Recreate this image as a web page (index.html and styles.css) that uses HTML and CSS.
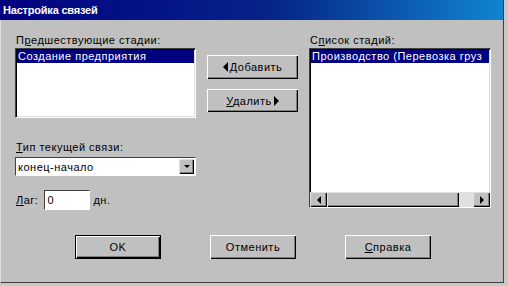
FILE: index.html
```html
<!DOCTYPE html>
<html lang="ru">

<head>
    <meta charset="UTF-8">
    <meta name="viewport" content="width=device-width, initial-scale=1.0">
    <title>Настройка связей</title>
    <link rel="stylesheet" href="styles.css">
</head>

<body>
    <div class="dialog">
        <div class="titlebar">Настройка связей</div>

        <div class="content">
            <!-- left column: predecessors, link type, lag -->
            <div class="col col-left">
                <div class="label">П<u>р</u>едшествующие стадии:</div>
                <div class="listbox list-left">
                    <div class="item selected">Создание предприятия</div>
                </div>

                <div class="label label-type"><u>Т</u>ип текущей связи:</div>
                <div class="combo">
                    <span class="combo-text">конец-начало</span>
                    <span class="combo-btn"><span class="tri-down"></span></span>
                </div>

                <div class="lag-row">
                    <span class="label"><u>Л</u>аг:</span>
                    <span class="edit">0</span>
                    <span class="label">дн.</span>
                </div>
            </div>

            <!-- middle column: move buttons -->
            <div class="col col-mid">
                <button class="btn btn-add"><span class="tri-left"></span><span><u>Д</u>обавить</span></button>
                <button class="btn btn-del"><span><u>У</u>далить</span><span class="tri-right"></span></button>
            </div>

            <!-- right column: all stages -->
            <div class="col col-right">
                <div class="label">С<u>п</u>исок стадий:</div>
                <div class="listbox list-right">
                    <div class="list-body">
                        <div class="item selected">Производство (Перевозка груз</div>
                    </div>
                    <div class="hscroll">
                        <span class="sb-btn"><span class="tri-left small"></span></span>
                        <span class="sb-thumb"></span>
                        <span class="sb-track"></span>
                        <span class="sb-btn"><span class="tri-right small"></span></span>
                    </div>
                </div>
            </div>
        </div>

        <div class="footer">
            <button class="btn btn-default">OK</button>
            <button class="btn">Отменить</button>
            <button class="btn"><span><u>С</u>правка</span></button>
        </div>
    </div>
</body>

</html>
```

FILE: styles.css
```css
body {
    margin: 0;
    width: 508px;
    height: 286px;
    background: #c8c8c8;
    font-family: "Liberation Sans", Arial, sans-serif;
    font-size: 11px;
    letter-spacing: 0.5px;
    color: #000;
    overflow: hidden;
}

.dialog {
    width: 502px;
    height: 282px;
    background: #c0c0c0;
    border-left: 1px solid #dfdfdf;
    border-right: 1px solid #404040;
    border-bottom: 1px solid #404040;
    box-sizing: content-box;
}

.titlebar {
    height: 20px;
    line-height: 20px;
    padding-left: 3px;
    margin-left: -1px;
    color: white;
    font-weight: bold;
    font-size: 11px;
    letter-spacing: -0.2px;
    background: linear-gradient(to right, #000080 0%, #06258a 55%, #1084d0 100%);
}

.content {
    display: flex;
    padding-top: 14px;
}

.col {
    display: flex;
    flex-direction: column;
}

.col-left {
    width: 181px;
    margin-left: 14px;
}

.col-mid {
    width: 91px;
    margin-left: 11px;
    padding-top: 21px;
}

.col-right {
    width: 182px;
    margin-left: 11px;
}

.label {
    height: 13px;
    line-height: 13px;
    padding-left: 1px;
    margin-bottom: 1px;
    white-space: nowrap;
}

u {
    text-decoration-thickness: 1px;
    text-underline-offset: 1px;
}

.listbox {
    background: white;
    border-top: 1px solid #404040;
    border-left: 1px solid #404040;
    border-right: 1px solid #ffffff;
    border-bottom: 1px solid #ffffff;
    box-shadow: inset 1px 1px 0 #000, inset -1px -1px 0 #dfdfdf;
    padding: 1px;
    box-sizing: border-box;
    overflow: hidden;
}

.list-left {
    height: 70px;
}

.list-right {
    height: 160px;
    display: flex;
    flex-direction: column;
}

.list-body {
    flex: 1;
    overflow: hidden;
}

.item {
    height: 13px;
    line-height: 13px;
    padding-left: 1px;
    white-space: nowrap;
}

.selected {
    background: #000080;
    color: white;
}

.label-type {
    margin-top: 23px;
    margin-bottom: 3px;
}

.combo {
    height: 19px;
    display: flex;
    align-items: center;
    background: white;
    border-top: 1px solid #404040;
    border-left: 1px solid #404040;
    border-right: 1px solid #ffffff;
    border-bottom: 1px solid #ffffff;
    box-sizing: border-box;
    padding: 1px;
}

.combo-text {
    flex: 1;
    padding-left: 1px;
}

.combo-btn {
    width: 15px;
    height: 15px;
    background: #c0c0c0;
    box-shadow: inset 1px 1px 0 #dfdfdf, inset -1px -1px 0 #000, inset -2px -2px 0 #808080;
    display: flex;
    align-items: center;
    justify-content: center;
}

.tri-down {
    width: 0;
    height: 0;
    border-left: 3px solid transparent;
    border-right: 3px solid transparent;
    border-top: 3px solid #000;
}

.lag-row {
    display: flex;
    align-items: center;
    margin-top: 14px;
    gap: 2px;
}

.lag-row .label {
    margin-bottom: 0;
}

.edit {
    width: 46px;
    height: 20px;
    line-height: 18px;
    background: white;
    border-top: 1px solid #404040;
    border-left: 1px solid #404040;
    border-right: 1px solid #ffffff;
    border-bottom: 1px solid #ffffff;
    box-sizing: border-box;
    padding-left: 2px;
    margin-left: 4px;
}

.btn {
    font-family: "Liberation Sans", Arial, sans-serif;
    font-size: 11px;
    letter-spacing: 0.5px;
    color: #000;
    background: #c0c0c0;
    border: none;
    padding: 0;
    box-shadow: inset 1px 1px 0 #ffffff, inset -1px -1px 0 #000, inset -2px -2px 0 #808080;
    display: flex;
    align-items: center;
    justify-content: center;
    gap: 2px;
}

.btn-add {
    height: 24px;
}

.btn-del {
    height: 23px;
    margin-top: 10px;
}

.tri-left {
    width: 0;
    height: 0;
    border-top: 5px solid transparent;
    border-bottom: 5px solid transparent;
    border-right: 5px solid #000;
}

.tri-right {
    width: 0;
    height: 0;
    border-top: 5px solid transparent;
    border-bottom: 5px solid transparent;
    border-left: 5px solid #000;
}

.tri-left.small {
    border-top-width: 4px;
    border-bottom-width: 4px;
    border-right-width: 4px;
}

.tri-right.small {
    border-top-width: 4px;
    border-bottom-width: 4px;
    border-left-width: 4px;
}

.hscroll {
    display: flex;
    height: 15px;
    margin: 0 -1px -1px -1px;
}

.sb-btn {
    width: 17px;
    background: #c0c0c0;
    box-shadow: inset 1px 1px 0 #dfdfdf, inset -1px -1px 0 #000, inset -2px -2px 0 #808080;
    display: flex;
    align-items: center;
    justify-content: center;
}

.sb-thumb {
    width: 132px;
    background: #c0c0c0;
    box-shadow: inset 1px 1px 0 #dfdfdf, inset -1px -1px 0 #000, inset -2px -2px 0 #808080;
}

.sb-track {
    flex: 1;
    background: #e0e0e0;
}

.footer {
    display: flex;
    gap: 49px;
    padding-left: 74px;
    margin-top: 25px;
}

.footer .btn {
    width: 86px;
    height: 24px;
}

.btn-default {
    box-shadow: inset 0 0 0 1px #000, inset 2px 2px 0 #ffffff, inset -2px -2px 0 #000, inset -3px -3px 0 #808080;
}
```
